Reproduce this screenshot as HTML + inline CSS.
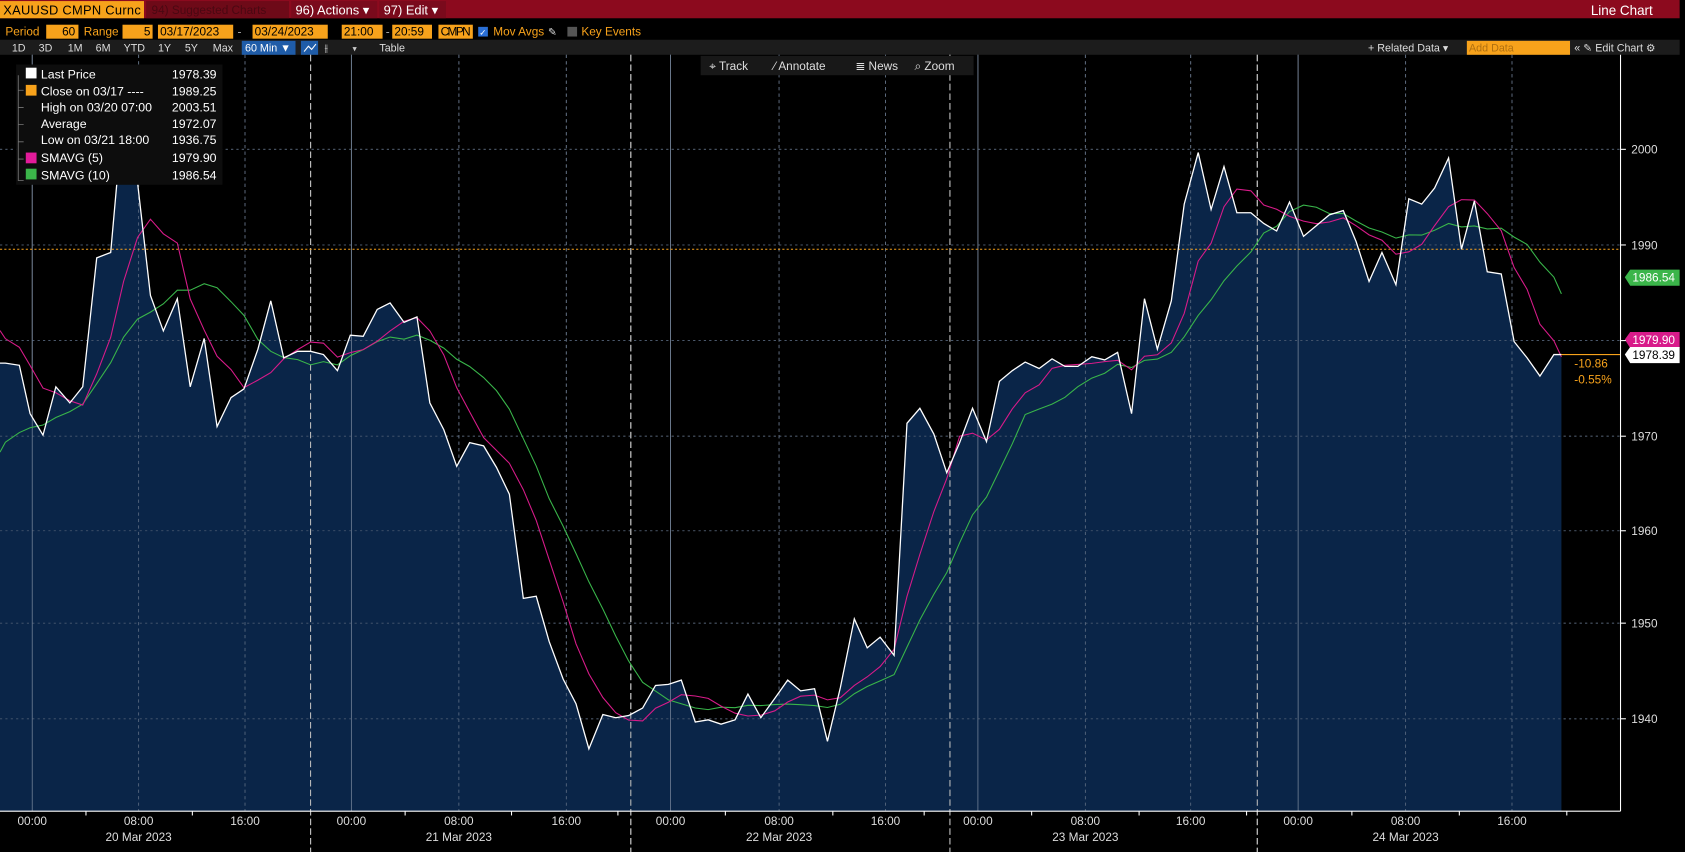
<!DOCTYPE html>
<html><head><meta charset="utf-8"><style>
html,body{margin:0;padding:0;background:#000;overflow:hidden}
svg{display:block}
text{font-family:"Liberation Sans",sans-serif}
</style></head><body>
<svg id="s" width="1685" height="852" viewBox="0 0 1568 793" preserveAspectRatio="none" xmlns="http://www.w3.org/2000/svg">
<rect width="1568" height="793" fill="#000"/>
<rect x="0" y="0" width="1563" height="17" fill="#8c0a1e"/>
<rect x="0" y="1" width="134" height="16" fill="#f7a21b"/>
<text x="3" y="13.5" font-size="12" fill="#000" textLength="128">XAUUSD CMPN Curnc</text>
<rect x="136" y="1" width="133" height="16" fill="#6e0a18"/>
<text x="141" y="13" font-size="11" fill="#4a0812">94) Suggested Charts</text>
<rect x="271" y="1" width="80" height="16" fill="#7a0a1c"/>
<text x="275" y="13.5" font-size="12" fill="#fff">96) Actions ▾</text>
<rect x="353" y="1" width="62" height="16" fill="#7a0a1c"/>
<text x="357" y="13.5" font-size="12" fill="#fff">97) Edit ▾</text>
<text x="1538" y="14" font-size="12.5" fill="#fff" text-anchor="end">Line Chart</text>
<text x="5" y="33" font-size="11" fill="#f7a21b">Period</text>
<rect x="43" y="23" width="30" height="13" fill="#f7a21b"/><text x="70" y="33" font-size="11" fill="#000" text-anchor="end">60</text>
<text x="78" y="33" font-size="11" fill="#f7a21b">Range</text>
<rect x="114" y="23" width="28" height="13" fill="#f7a21b"/><text x="140" y="33" font-size="11" fill="#000" text-anchor="end">5</text>
<rect x="147" y="23" width="70" height="13" fill="#f7a21b"/><text x="149" y="33" font-size="11" fill="#000">03/17/2023</text>
<text x="221" y="33" font-size="11" fill="#aaa">-</text>
<rect x="235" y="23" width="70" height="13" fill="#f7a21b"/><text x="237" y="33" font-size="11" fill="#000">03/24/2023</text>
<rect x="318" y="23" width="38" height="13" fill="#f7a21b"/><text x="320" y="33" font-size="11" fill="#000">21:00</text>
<text x="359" y="33" font-size="11" fill="#aaa">-</text>
<rect x="365" y="23" width="37" height="13" fill="#f7a21b"/><text x="367" y="33" font-size="11" fill="#000">20:59</text>
<rect x="408" y="23" width="32" height="13" fill="#f7a21b"/><text x="410" y="33" font-size="11" fill="#000" textLength="28">CMPN</text>
<rect x="445" y="25" width="9" height="9" fill="#2a6fd6"/><text x="446" y="33" font-size="8" fill="#fff">✓</text>
<text x="459" y="33" font-size="11" fill="#f7a21b">Mov Avgs</text>
<text x="510" y="33" font-size="10" fill="#ddd">✎</text>
<rect x="528" y="25" width="9" height="9" fill="#555"/>
<text x="541" y="33" font-size="11" fill="#f7a21b">Key Events</text>
<rect x="0" y="37" width="1563" height="14" fill="#1c1c1c"/>
<g font-size="10" fill="#ddd">
<text x="11" y="48">1D</text><text x="36" y="48">3D</text><text x="63" y="48">1M</text><text x="89" y="48">6M</text><text x="115" y="48">YTD</text><text x="147" y="48">1Y</text><text x="172" y="48">5Y</text><text x="198" y="48">Max</text>
</g>
<rect x="225" y="38" width="50" height="13" fill="#1f5ca8"/><text x="228" y="48" font-size="10" fill="#fff">60 Min ▼</text>
<rect x="280" y="38" width="16" height="13" fill="#1f5ca8"/>
<polyline points="283,48 287,43 290,46 294,41" fill="none" stroke="#fff" stroke-width="1"/>
<text x="302" y="48" font-size="10" fill="#ccc">⫲</text>
<text x="328" y="48" font-size="8" fill="#ccc">▾</text>
<text x="353" y="48" font-size="10" fill="#ddd">Table</text>
<text x="1273" y="48" font-size="10" fill="#ddd">+ Related Data ▾</text>
<rect x="1365" y="38" width="96" height="13" fill="#f7a21b"/><text x="1367" y="48" font-size="10" fill="#b07010">Add Data</text>
<text x="1465" y="48" font-size="10" fill="#ddd">«  ✎ Edit Chart  ⚙</text>
<g id="grid"></g>
<path id="fill" fill="#0a2548"/>
<g id="grid2"></g>
<line x1="0" y1="232" x2="1508" y2="232" stroke="#f7a21b" stroke-width="1" stroke-dasharray="2,2"/>
<polyline id="green" fill="none" stroke="#39b54a" stroke-width="1"/>
<polyline id="pink" fill="none" stroke="#d81b8a" stroke-width="1"/>
<polyline id="white" fill="none" stroke="#fff" stroke-width="1.2"/>
<line x1="1453" y1="330" x2="1508" y2="330" stroke="#f7a21b" stroke-width="1"/>
<text x="1465" y="342" font-size="11" fill="#f7a21b">-10.86</text>
<text x="1465" y="357" font-size="11" fill="#f7a21b">-0.55%</text>
<line x1="1508" y1="51" x2="1508" y2="755" stroke="#fff"/>
<g font-size="11" fill="#ddd">
<text x="1518" y="143">2000</text><text x="1518" y="232">1990</text><text x="1518" y="410">1970</text><text x="1518" y="498">1960</text><text x="1518" y="584">1950</text><text x="1518" y="673">1940</text>
</g>
<polygon points="1512,258 1517,251 1563,251 1563,266 1517,266" fill="#3bb54a"/><text x="1519" y="262" font-size="11" fill="#fff">1986.54</text>
<polygon points="1512,316 1517,309 1563,309 1563,324 1517,324" fill="#d81b8a"/><text x="1519" y="320" font-size="11" fill="#fff">1979.90</text>
<polygon points="1512,330 1517,323 1563,323 1563,338 1517,338" fill="#fff"/><text x="1519" y="334" font-size="11" fill="#000">1978.39</text>
<rect x="15" y="60" width="192" height="112" fill="#0d0d0d"/>
<g font-size="11.5" fill="#fff">
<rect x="24" y="63" width="10" height="10" fill="#fff"/><text x="38" y="73">Last Price</text><text x="160" y="73">1978.39</text>
<rect x="24" y="79" width="10" height="10" fill="#f7a21b"/><text x="38" y="89">Close on 03/17 ----</text><text x="160" y="89">1989.25</text>
<text x="38" y="104">High on 03/20 07:00</text><text x="160" y="104">2003.51</text>
<text x="38" y="119">Average</text><text x="160" y="119">1972.07</text>
<text x="38" y="134">Low on 03/21 18:00</text><text x="160" y="134">1936.75</text>
<rect x="24" y="142" width="10" height="10" fill="#e21b9a"/><text x="38" y="151">SMAVG (5)</text><text x="160" y="151">1979.90</text>
<rect x="24" y="157" width="10" height="10" fill="#3bb54a"/><text x="38" y="167">SMAVG (10)</text><text x="160" y="167">1986.54</text>
</g>
<path d="M17,70V168H22M17,84H22M17,100H22M17,116H22M17,132H22M17,148H22" stroke="#777" fill="none" stroke-width="0.8"/>
<rect x="652" y="52" width="254" height="18" fill="#181818"/>
<g font-size="11" fill="#ddd"><text x="660" y="65">⌖ Track</text><text x="720" y="65">⁄ Annotate</text><text x="796" y="65">≣ News</text><text x="851" y="65">⌕ Zoom</text></g>
<line x1="0" y1="755" x2="1508" y2="755" stroke="#fff"/>
<g id="xax" font-size="11" fill="#ddd" text-anchor="middle">
<text x="30" y="768">00:00</text><text x="129" y="768">08:00</text><text x="228" y="768">16:00</text>
<text x="327" y="768">00:00</text><text x="427" y="768">08:00</text><text x="527" y="768">16:00</text>
<text x="624" y="768">00:00</text><text x="725" y="768">08:00</text><text x="824" y="768">16:00</text>
<text x="910" y="768">00:00</text><text x="1010" y="768">08:00</text><text x="1108" y="768">16:00</text>
<text x="1208" y="768">00:00</text><text x="1308" y="768">08:00</text><text x="1407" y="768">16:00</text>
<text x="129" y="783">20 Mar 2023</text><text x="427" y="783">21 Mar 2023</text><text x="725" y="783">22 Mar 2023</text><text x="1010" y="783">23 Mar 2023</text><text x="1308" y="783">24 Mar 2023</text>
</g>
</svg>
<script>
var P=[[5,338],[18,340],[28,385],[40,405],[52,360],[65,375],[77,360],[90,240],[103,235],[115,100],[128,170],[140,275],[152,308],[165,278],[177,360],[190,315],[202,397],[215,370],[227,362],[240,325],[252,280],[264,333],[277,327],[289,327],[301,330],[314,345],[326,312],[338,313],[351,288],[363,282],[376,300],[388,295],[400,375],[413,400],[425,434],[437,412],[450,415],[462,435],[474,460],[487,557],[499,555],[511,597],[524,632],[536,655],[548,697],[561,665],[573,668],[585,666],[598,659],[610,638],[622,637],[634,633],[647,672],[659,670],[671,674],[684,670],[696,646],[708,668],[721,650],[733,633],[745,643],[758,641],[770,690],[782,640],[795,576],[807,603],[819,593],[832,610],[844,394],[856,380],[869,404],[881,440],[893,412],[905,380],[918,411],[930,355],[942,345],[954,337],[967,343],[979,334],[991,341],[1003,341],[1016,332],[1028,335],[1040,328],[1053,385],[1065,278],[1077,325],[1090,280],[1102,190],[1115,142],[1127,195],[1139,155],[1151,198],[1164,198],[1176,208],[1188,215],[1200,188],[1213,220],[1225,210],[1237,200],[1250,196],[1262,225],[1274,262],[1286,235],[1299,265],[1311,185],[1323,190],[1335,175],[1348,147],[1360,232],[1372,187],[1384,253],[1397,255],[1409,318],[1421,333],[1433,350],[1446,330],[1453,330]];
P.unshift([0,338]);
function $(i){return document.getElementById(i)}
$('white').setAttribute('points',P.map(p=>p.join(',')).join(' '));
$('fill').setAttribute('d','M0,755L'+P.map(p=>p.join(',')).join('L')+'L1453,755Z');
function sma(n,pre){var out=[];for(var i=0;i<P.length;i++){var s=0,c=0;for(var j=i-n+1;j<=i;j++){s+=j>=0?P[j][1]:pre;c++}out.push(P[i][0]+','+(s/c).toFixed(1))}return out.join(' ')}
$('pink').setAttribute('points',sma(5,300));
$('green').setAttribute('points',sma(10,430));
var g='',ys=[139,228,317,406,494,580,669];
ys.forEach(y=>g+='<line x1="0" y1="'+y+'" x2="1508" y2="'+y+'" stroke="#666" stroke-width="0.8" stroke-dasharray="2,3"/>');
[30,327,624,910,1208].forEach(x=>g+='<line x1="'+x+'" y1="51" x2="'+x+'" y2="755" stroke="#888" stroke-width="0.8"/>');
[129,228,427,527,725,824,1010,1108,1308,1407].forEach(x=>g+='<line x1="'+x+'" y1="51" x2="'+x+'" y2="755" stroke="#777" stroke-width="0.8" stroke-dasharray="3,3"/>');
[289,587,884,1170].forEach(x=>g+='<line x1="'+x+'" y1="51" x2="'+x+'" y2="793" stroke="#bbb" stroke-width="1" stroke-dasharray="6,3"/>');
$('grid').innerHTML=g;$('grid2').innerHTML=g.replace(/#666/g,'#4a5a70').replace(/#888/g,'#6a7a90').replace(/#777/g,'#5a6a80');
var t='';[80,179,377,476,575,675,775,860,960,1060,1160,1258,1358,1458].forEach(x=>t+='<line x1="'+x+'" y1="755" x2="'+x+'" y2="759" stroke="#fff"/>');
[139,228,317,406,494,580,669].forEach(y=>t+='<line x1="1508" y1="'+y+'" x2="1513" y2="'+y+'" stroke="#fff"/>');
$('xax').insertAdjacentHTML('beforeend',t);
</script>
</body></html>
